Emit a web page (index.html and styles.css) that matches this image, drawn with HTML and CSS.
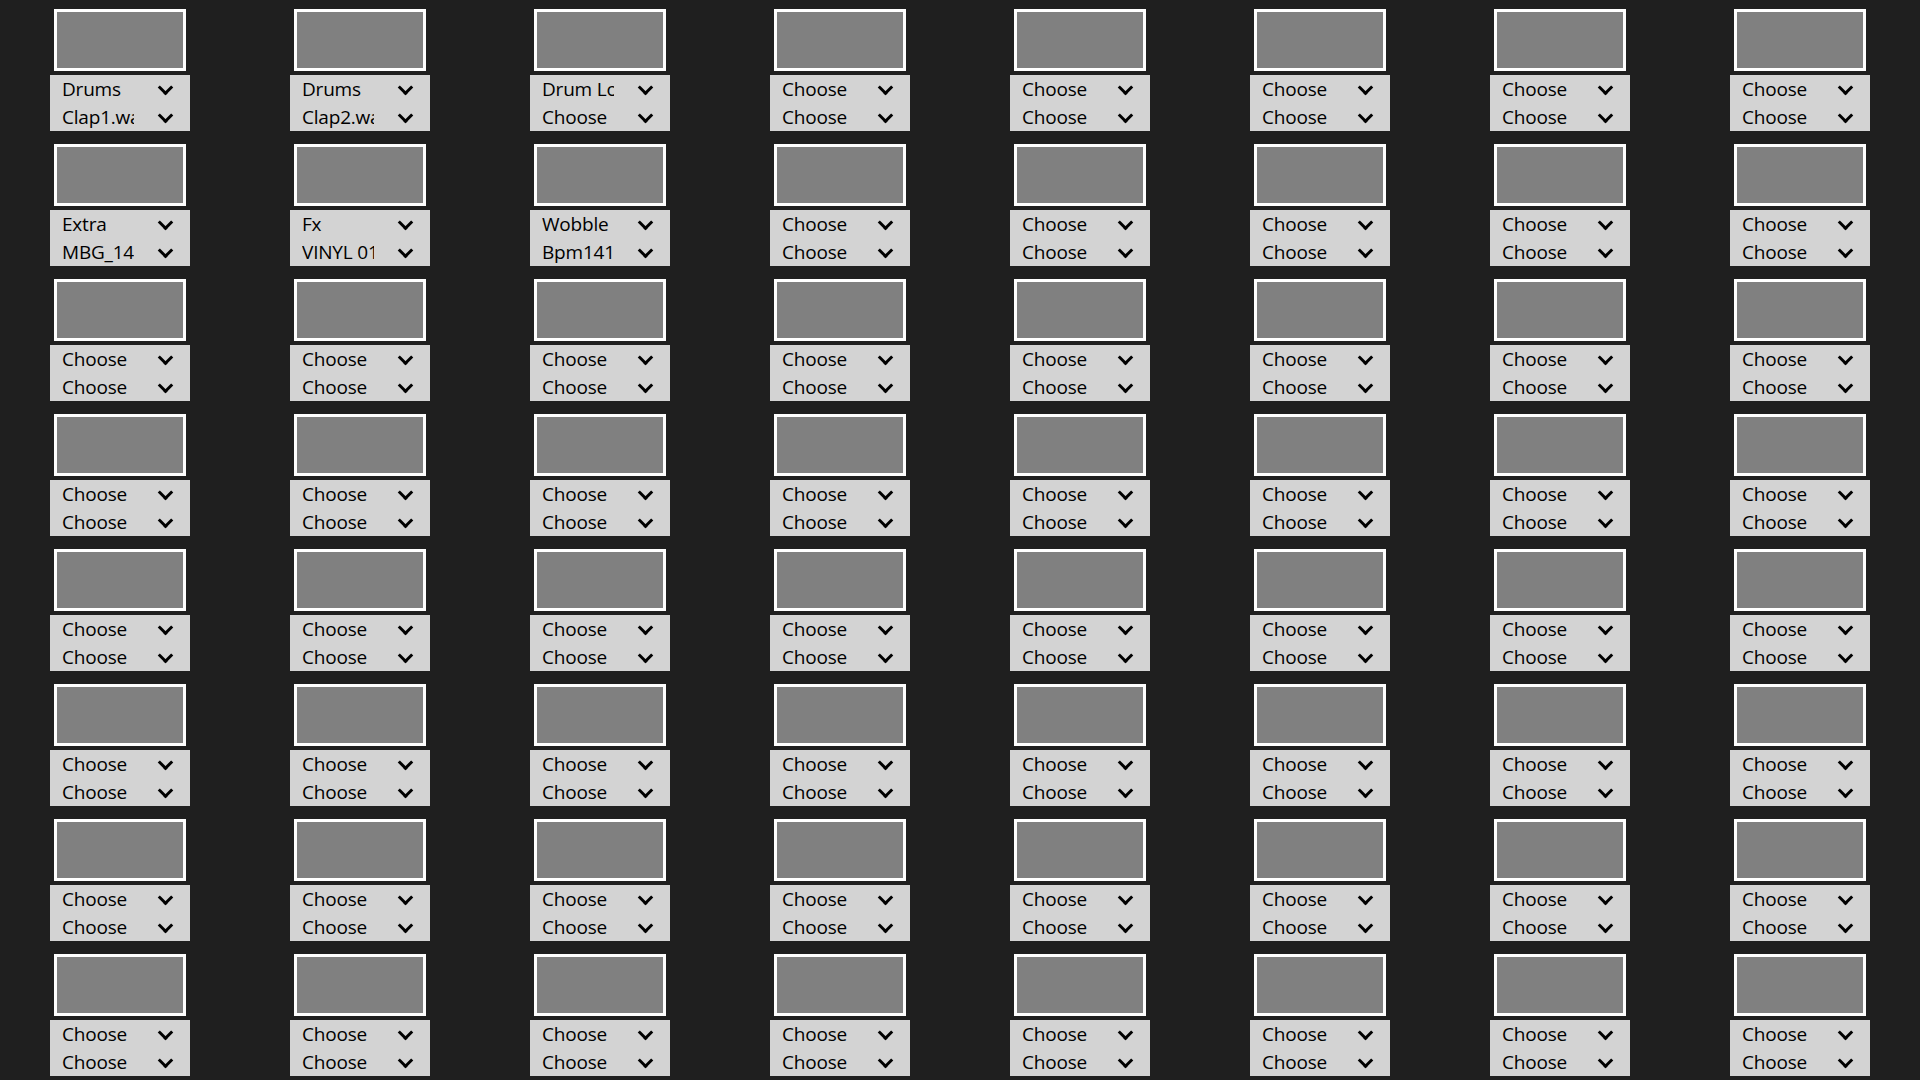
FILE: index.html
```html
<!DOCTYPE html>
<html lang="en">
<head>
<meta charset="utf-8">
<title>Pads</title>
<link rel="stylesheet" href="styles.css">
</head>
<body>
<main class="grid">
  <!-- row 1 -->
  <div class="cell"><div class="pad"></div><div class="dd"><div class="sel"><span class="val">Drums</span></div><div class="sel"><span class="val">Clap1.wav</span></div></div></div>
  <div class="cell"><div class="pad"></div><div class="dd"><div class="sel"><span class="val">Drums</span></div><div class="sel"><span class="val">Clap2.wav</span></div></div></div>
  <div class="cell"><div class="pad"></div><div class="dd"><div class="sel"><span class="val">Drum Loops</span></div><div class="sel"><span class="val">Choose</span></div></div></div>
  <div class="cell"><div class="pad"></div><div class="dd"><div class="sel"><span class="val">Choose</span></div><div class="sel"><span class="val">Choose</span></div></div></div>
  <div class="cell"><div class="pad"></div><div class="dd"><div class="sel"><span class="val">Choose</span></div><div class="sel"><span class="val">Choose</span></div></div></div>
  <div class="cell"><div class="pad"></div><div class="dd"><div class="sel"><span class="val">Choose</span></div><div class="sel"><span class="val">Choose</span></div></div></div>
  <div class="cell"><div class="pad"></div><div class="dd"><div class="sel"><span class="val">Choose</span></div><div class="sel"><span class="val">Choose</span></div></div></div>
  <div class="cell"><div class="pad"></div><div class="dd"><div class="sel"><span class="val">Choose</span></div><div class="sel"><span class="val">Choose</span></div></div></div>
  <!-- row 2 -->
  <div class="cell"><div class="pad"></div><div class="dd"><div class="sel"><span class="val">Extra</span></div><div class="sel"><span class="val">MBG_14.wav</span></div></div></div>
  <div class="cell"><div class="pad"></div><div class="dd"><div class="sel"><span class="val">Fx</span></div><div class="sel"><span class="val">VINYL 01.wav</span></div></div></div>
  <div class="cell"><div class="pad"></div><div class="dd"><div class="sel"><span class="val">Wobble</span></div><div class="sel"><span class="val">Bpm141.wav</span></div></div></div>
  <div class="cell"><div class="pad"></div><div class="dd"><div class="sel"><span class="val">Choose</span></div><div class="sel"><span class="val">Choose</span></div></div></div>
  <div class="cell"><div class="pad"></div><div class="dd"><div class="sel"><span class="val">Choose</span></div><div class="sel"><span class="val">Choose</span></div></div></div>
  <div class="cell"><div class="pad"></div><div class="dd"><div class="sel"><span class="val">Choose</span></div><div class="sel"><span class="val">Choose</span></div></div></div>
  <div class="cell"><div class="pad"></div><div class="dd"><div class="sel"><span class="val">Choose</span></div><div class="sel"><span class="val">Choose</span></div></div></div>
  <div class="cell"><div class="pad"></div><div class="dd"><div class="sel"><span class="val">Choose</span></div><div class="sel"><span class="val">Choose</span></div></div></div>
  <!-- row 3 -->
  <div class="cell"><div class="pad"></div><div class="dd"><div class="sel"><span class="val">Choose</span></div><div class="sel"><span class="val">Choose</span></div></div></div>
  <div class="cell"><div class="pad"></div><div class="dd"><div class="sel"><span class="val">Choose</span></div><div class="sel"><span class="val">Choose</span></div></div></div>
  <div class="cell"><div class="pad"></div><div class="dd"><div class="sel"><span class="val">Choose</span></div><div class="sel"><span class="val">Choose</span></div></div></div>
  <div class="cell"><div class="pad"></div><div class="dd"><div class="sel"><span class="val">Choose</span></div><div class="sel"><span class="val">Choose</span></div></div></div>
  <div class="cell"><div class="pad"></div><div class="dd"><div class="sel"><span class="val">Choose</span></div><div class="sel"><span class="val">Choose</span></div></div></div>
  <div class="cell"><div class="pad"></div><div class="dd"><div class="sel"><span class="val">Choose</span></div><div class="sel"><span class="val">Choose</span></div></div></div>
  <div class="cell"><div class="pad"></div><div class="dd"><div class="sel"><span class="val">Choose</span></div><div class="sel"><span class="val">Choose</span></div></div></div>
  <div class="cell"><div class="pad"></div><div class="dd"><div class="sel"><span class="val">Choose</span></div><div class="sel"><span class="val">Choose</span></div></div></div>
  <!-- row 4 -->
  <div class="cell"><div class="pad"></div><div class="dd"><div class="sel"><span class="val">Choose</span></div><div class="sel"><span class="val">Choose</span></div></div></div>
  <div class="cell"><div class="pad"></div><div class="dd"><div class="sel"><span class="val">Choose</span></div><div class="sel"><span class="val">Choose</span></div></div></div>
  <div class="cell"><div class="pad"></div><div class="dd"><div class="sel"><span class="val">Choose</span></div><div class="sel"><span class="val">Choose</span></div></div></div>
  <div class="cell"><div class="pad"></div><div class="dd"><div class="sel"><span class="val">Choose</span></div><div class="sel"><span class="val">Choose</span></div></div></div>
  <div class="cell"><div class="pad"></div><div class="dd"><div class="sel"><span class="val">Choose</span></div><div class="sel"><span class="val">Choose</span></div></div></div>
  <div class="cell"><div class="pad"></div><div class="dd"><div class="sel"><span class="val">Choose</span></div><div class="sel"><span class="val">Choose</span></div></div></div>
  <div class="cell"><div class="pad"></div><div class="dd"><div class="sel"><span class="val">Choose</span></div><div class="sel"><span class="val">Choose</span></div></div></div>
  <div class="cell"><div class="pad"></div><div class="dd"><div class="sel"><span class="val">Choose</span></div><div class="sel"><span class="val">Choose</span></div></div></div>
  <!-- row 5 -->
  <div class="cell"><div class="pad"></div><div class="dd"><div class="sel"><span class="val">Choose</span></div><div class="sel"><span class="val">Choose</span></div></div></div>
  <div class="cell"><div class="pad"></div><div class="dd"><div class="sel"><span class="val">Choose</span></div><div class="sel"><span class="val">Choose</span></div></div></div>
  <div class="cell"><div class="pad"></div><div class="dd"><div class="sel"><span class="val">Choose</span></div><div class="sel"><span class="val">Choose</span></div></div></div>
  <div class="cell"><div class="pad"></div><div class="dd"><div class="sel"><span class="val">Choose</span></div><div class="sel"><span class="val">Choose</span></div></div></div>
  <div class="cell"><div class="pad"></div><div class="dd"><div class="sel"><span class="val">Choose</span></div><div class="sel"><span class="val">Choose</span></div></div></div>
  <div class="cell"><div class="pad"></div><div class="dd"><div class="sel"><span class="val">Choose</span></div><div class="sel"><span class="val">Choose</span></div></div></div>
  <div class="cell"><div class="pad"></div><div class="dd"><div class="sel"><span class="val">Choose</span></div><div class="sel"><span class="val">Choose</span></div></div></div>
  <div class="cell"><div class="pad"></div><div class="dd"><div class="sel"><span class="val">Choose</span></div><div class="sel"><span class="val">Choose</span></div></div></div>
  <!-- row 6 -->
  <div class="cell"><div class="pad"></div><div class="dd"><div class="sel"><span class="val">Choose</span></div><div class="sel"><span class="val">Choose</span></div></div></div>
  <div class="cell"><div class="pad"></div><div class="dd"><div class="sel"><span class="val">Choose</span></div><div class="sel"><span class="val">Choose</span></div></div></div>
  <div class="cell"><div class="pad"></div><div class="dd"><div class="sel"><span class="val">Choose</span></div><div class="sel"><span class="val">Choose</span></div></div></div>
  <div class="cell"><div class="pad"></div><div class="dd"><div class="sel"><span class="val">Choose</span></div><div class="sel"><span class="val">Choose</span></div></div></div>
  <div class="cell"><div class="pad"></div><div class="dd"><div class="sel"><span class="val">Choose</span></div><div class="sel"><span class="val">Choose</span></div></div></div>
  <div class="cell"><div class="pad"></div><div class="dd"><div class="sel"><span class="val">Choose</span></div><div class="sel"><span class="val">Choose</span></div></div></div>
  <div class="cell"><div class="pad"></div><div class="dd"><div class="sel"><span class="val">Choose</span></div><div class="sel"><span class="val">Choose</span></div></div></div>
  <div class="cell"><div class="pad"></div><div class="dd"><div class="sel"><span class="val">Choose</span></div><div class="sel"><span class="val">Choose</span></div></div></div>
  <!-- row 7 -->
  <div class="cell"><div class="pad"></div><div class="dd"><div class="sel"><span class="val">Choose</span></div><div class="sel"><span class="val">Choose</span></div></div></div>
  <div class="cell"><div class="pad"></div><div class="dd"><div class="sel"><span class="val">Choose</span></div><div class="sel"><span class="val">Choose</span></div></div></div>
  <div class="cell"><div class="pad"></div><div class="dd"><div class="sel"><span class="val">Choose</span></div><div class="sel"><span class="val">Choose</span></div></div></div>
  <div class="cell"><div class="pad"></div><div class="dd"><div class="sel"><span class="val">Choose</span></div><div class="sel"><span class="val">Choose</span></div></div></div>
  <div class="cell"><div class="pad"></div><div class="dd"><div class="sel"><span class="val">Choose</span></div><div class="sel"><span class="val">Choose</span></div></div></div>
  <div class="cell"><div class="pad"></div><div class="dd"><div class="sel"><span class="val">Choose</span></div><div class="sel"><span class="val">Choose</span></div></div></div>
  <div class="cell"><div class="pad"></div><div class="dd"><div class="sel"><span class="val">Choose</span></div><div class="sel"><span class="val">Choose</span></div></div></div>
  <div class="cell"><div class="pad"></div><div class="dd"><div class="sel"><span class="val">Choose</span></div><div class="sel"><span class="val">Choose</span></div></div></div>
  <!-- row 8 -->
  <div class="cell"><div class="pad"></div><div class="dd"><div class="sel"><span class="val">Choose</span></div><div class="sel"><span class="val">Choose</span></div></div></div>
  <div class="cell"><div class="pad"></div><div class="dd"><div class="sel"><span class="val">Choose</span></div><div class="sel"><span class="val">Choose</span></div></div></div>
  <div class="cell"><div class="pad"></div><div class="dd"><div class="sel"><span class="val">Choose</span></div><div class="sel"><span class="val">Choose</span></div></div></div>
  <div class="cell"><div class="pad"></div><div class="dd"><div class="sel"><span class="val">Choose</span></div><div class="sel"><span class="val">Choose</span></div></div></div>
  <div class="cell"><div class="pad"></div><div class="dd"><div class="sel"><span class="val">Choose</span></div><div class="sel"><span class="val">Choose</span></div></div></div>
  <div class="cell"><div class="pad"></div><div class="dd"><div class="sel"><span class="val">Choose</span></div><div class="sel"><span class="val">Choose</span></div></div></div>
  <div class="cell"><div class="pad"></div><div class="dd"><div class="sel"><span class="val">Choose</span></div><div class="sel"><span class="val">Choose</span></div></div></div>
  <div class="cell"><div class="pad"></div><div class="dd"><div class="sel"><span class="val">Choose</span></div><div class="sel"><span class="val">Choose</span></div></div></div>
</main>
</body>
</html>
```

FILE: styles.css
```css
html, body {
  margin: 0;
  padding: 0;
  background: #1f1f1f;
}

body {
  width: 1920px;
  height: 1080px;
  overflow: hidden;
  font-family: "Open Sans", "Noto Sans", sans-serif;
  color: #000;
}

.grid {
  display: grid;
  grid-template-columns: repeat(8, 240px);
  grid-template-rows: repeat(8, 135px);
  width: 1920px;
  height: 1080px;
}

.cell {
  display: flex;
  flex-direction: column;
  align-items: center;
  padding-top: 9px;
  box-sizing: border-box;
}

.pad {
  width: 132px;
  height: 62px;
  box-sizing: border-box;
  border: 3px solid #ffffff;
  background: #808080;
}

.dd {
  margin-top: 4px;
  width: 140px;
  height: 56px;
  background: #d3d3d3;
  display: flex;
  flex-direction: column;
}

.sel {
  height: 28px;
  display: flex;
  align-items: center;
  padding-left: 12px;
}

.val {
  width: 72px;
  overflow: hidden;
  white-space: nowrap;
  font-size: 19px;
  line-height: 28px;
  letter-spacing: -0.2px;
}

.sel::after {
  content: "";
  width: 11px;
  height: 11px;
  box-sizing: border-box;
  margin-left: 26px;
  border-right: 3.5px solid #000;
  border-bottom: 3.5px solid #000;
  transform: translateY(-2px) rotate(45deg);
}
```
